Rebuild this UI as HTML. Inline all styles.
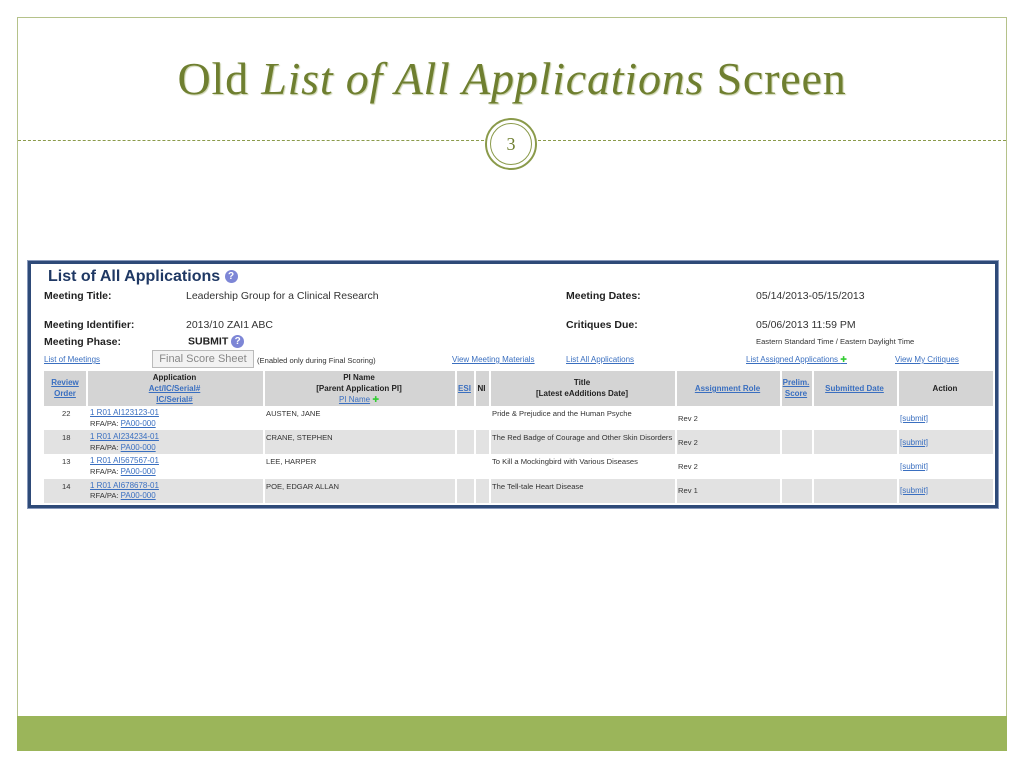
<!DOCTYPE html>
<html><head><meta charset="utf-8"><style>
*{margin:0;padding:0;box-sizing:border-box}
body{width:1024px;height:768px;background:#fff;position:relative;overflow:hidden;font-family:"Liberation Sans",Arial,sans-serif}
.a{position:absolute;white-space:nowrap}
.frame{left:17px;top:17px;width:990px;height:734px;border:1px solid #b5c28a}
.bar{left:17px;top:716px;width:990px;height:35px;background:#9bb55a}
.title{left:0;width:1024px;top:52px;text-align:center;font-family:"Liberation Serif",serif;font-size:46px;letter-spacing:0.8px;color:#6f7f30;text-shadow:1px 1px 1px #c7cfa8}
.dash{top:140px;height:0;border-top:1px dashed #8a9a4a}
.circ{left:485px;top:118px;width:52px;height:52px;border-radius:50%;border:2px solid #8a9a4a;background:#fff}
.circ2{left:490px;top:123px;width:42px;height:42px;border-radius:50%;border:1.5px solid #8a9a4a;text-align:center;line-height:40px;font-family:"Liberation Serif",serif;font-size:18px;color:#6f7f30}
.shot{left:28px;top:261px;width:970px;height:247px;border:3px solid #2e4a78;outline:1px solid #8899bb}
.b{font-weight:bold;font-size:10.5px;color:#222}
.t{font-size:10.5px;color:#333}
.s{font-size:7.6px;color:#333}
.l{font-size:8px;color:#3a6fc0;text-decoration:underline}
.hd{background:#d4d4d4}
.row{background:#e2e2e2}
.q{display:inline-block;width:13px;height:13px;border-radius:50%;background:#7d86d6;color:#fff;font-size:10px;line-height:13px;text-align:center;font-weight:bold;vertical-align:middle}
.c{text-align:center;font-size:8px;line-height:11px;font-weight:bold;color:#222}
.vl{width:2px;background:#fff}
</style></head><body>
<div class="a frame"></div>
<div class="a bar"></div>
<div class="a title">Old <i>List of All Applications</i> Screen</div>
<div class="a dash" style="left:18px;width:466px"></div>
<div class="a dash" style="left:538px;width:468px"></div>
<div class="a circ"></div><div class="a circ2">3</div>

<div class="a shot"></div>
<div class="a" style="left:48px;top:268px;font-size:16px;font-weight:bold;color:#1f3864">List of All Applications <span class="q">?</span></div>
<div class="a b" style="left:44px;top:290px">Meeting Title:</div>
<div class="a t" style="left:186px;top:290px">Leadership Group for a Clinical Research</div>
<div class="a b" style="left:566px;top:290px">Meeting Dates:</div>
<div class="a t" style="left:756px;top:290px">05/14/2013-05/15/2013</div>
<div class="a b" style="left:44px;top:319px">Meeting Identifier:</div>
<div class="a t" style="left:186px;top:319px">2013/10 ZAI1 ABC</div>
<div class="a b" style="left:566px;top:319px">Critiques Due:</div>
<div class="a t" style="left:756px;top:319px">05/06/2013 11:59 PM</div>
<div class="a b" style="left:44px;top:336px">Meeting Phase:</div>
<div class="a b" style="left:188px;top:335px">SUBMIT <span class="q">?</span></div>
<div class="a s" style="left:756px;top:337px">Eastern Standard Time / Eastern Daylight Time</div>
<div class="a l" style="left:44px;top:355px">List of Meetings</div>
<div class="a" style="left:152px;top:350px;width:102px;height:18px;border:1px solid #bbb;background:#f2f2f2;color:#888;font-size:11px;text-align:center;line-height:16px">Final Score Sheet</div>
<div class="a s" style="left:257px;top:356px">(Enabled only during Final Scoring)</div>
<div class="a l" style="left:452px;top:355px">View Meeting Materials</div>
<div class="a l" style="left:566px;top:355px">List All Applications</div>
<div class="a l" style="left:746px;top:355px">List Assigned Applications <span style="color:#3c3;text-decoration:none">✚</span></div>
<div class="a l" style="left:895px;top:355px">View My Critiques</div>

<div class="a hd" style="left:44px;top:371px;width:949px;height:35px"></div>
<div class="a row" style="left:44px;top:430px;width:949px;height:24px"></div>
<div class="a row" style="left:44px;top:479px;width:949px;height:24px"></div>
<div class="a vl" style="left:86px;top:371px;height:35px"></div>
<div class="a vl" style="left:263px;top:371px;height:132px"></div>
<div class="a vl" style="left:455px;top:371px;height:132px"></div>
<div class="a vl" style="left:474px;top:371px;height:132px"></div>
<div class="a vl" style="left:489px;top:371px;height:132px"></div>
<div class="a vl" style="left:675px;top:371px;height:132px"></div>
<div class="a vl" style="left:780px;top:371px;height:132px"></div>
<div class="a vl" style="left:812px;top:371px;height:132px"></div>
<div class="a vl" style="left:897px;top:371px;height:132px"></div>

<div class="a c" style="left:44px;top:377px;width:42px;color:#3a6fc0;text-decoration:underline">Review<br>Order</div>
<div class="a c" style="left:86px;top:372px;width:177px">Application<br><u style="color:#3a6fc0">Act/IC/Serial#</u><br><u style="color:#3a6fc0">IC/Serial#</u></div>
<div class="a c" style="left:263px;top:372px;width:192px">PI Name<br>[Parent Application PI]<br><span style="color:#3a6fc0;font-weight:normal"><u>PI Name</u> <span style="color:#3c3">✚</span></span></div>
<div class="a c" style="left:455px;top:383px;width:19px;color:#3a6fc0;text-decoration:underline">ESI</div>
<div class="a c" style="left:474px;top:383px;width:15px">NI</div>
<div class="a c" style="left:489px;top:377px;width:186px">Title<br>[Latest eAdditions Date]</div>
<div class="a c" style="left:675px;top:383px;width:105px;color:#3a6fc0;text-decoration:underline">Assignment Role</div>
<div class="a c" style="left:780px;top:377px;width:32px;color:#3a6fc0;text-decoration:underline">Prelim.<br>Score</div>
<div class="a c" style="left:812px;top:383px;width:85px;color:#3a6fc0;text-decoration:underline">Submitted Date</div>
<div class="a c" style="left:897px;top:383px;width:96px">Action</div>

<div class="a s" style="left:62px;top:409px">22</div>
<div class="a l" style="left:90px;top:408px">1 R01 AI123123-01</div>
<div class="a s" style="left:90px;top:419px">RFA/PA: <span class="l">PA00-000</span></div>
<div class="a s" style="left:266px;top:409px">AUSTEN, JANE</div>
<div class="a s" style="left:492px;top:409px">Pride &amp; Prejudice and the Human Psyche</div>
<div class="a s" style="left:678px;top:414px">Rev 2</div>
<div class="a l" style="left:900px;top:414px">[submit]</div>

<div class="a s" style="left:62px;top:433px">18</div>
<div class="a l" style="left:90px;top:432px">1 R01 AI234234-01</div>
<div class="a s" style="left:90px;top:443px">RFA/PA: <span class="l">PA00-000</span></div>
<div class="a s" style="left:266px;top:433px">CRANE, STEPHEN</div>
<div class="a s" style="left:492px;top:433px">The Red Badge of Courage and Other Skin Disorders</div>
<div class="a s" style="left:678px;top:438px">Rev 2</div>
<div class="a l" style="left:900px;top:438px">[submit]</div>

<div class="a s" style="left:62px;top:457px">13</div>
<div class="a l" style="left:90px;top:456px">1 R01 AI567567-01</div>
<div class="a s" style="left:90px;top:467px">RFA/PA: <span class="l">PA00-000</span></div>
<div class="a s" style="left:266px;top:457px">LEE, HARPER</div>
<div class="a s" style="left:492px;top:457px">To Kill a Mockingbird with Various Diseases</div>
<div class="a s" style="left:678px;top:462px">Rev 2</div>
<div class="a l" style="left:900px;top:462px">[submit]</div>

<div class="a s" style="left:62px;top:482px">14</div>
<div class="a l" style="left:90px;top:481px">1 R01 AI678678-01</div>
<div class="a s" style="left:90px;top:491px">RFA/PA: <span class="l">PA00-000</span></div>
<div class="a s" style="left:266px;top:482px">POE, EDGAR ALLAN</div>
<div class="a s" style="left:492px;top:482px">The Tell-tale Heart Disease</div>
<div class="a s" style="left:678px;top:486px">Rev 1</div>
<div class="a l" style="left:900px;top:486px">[submit]</div>
</body></html>
